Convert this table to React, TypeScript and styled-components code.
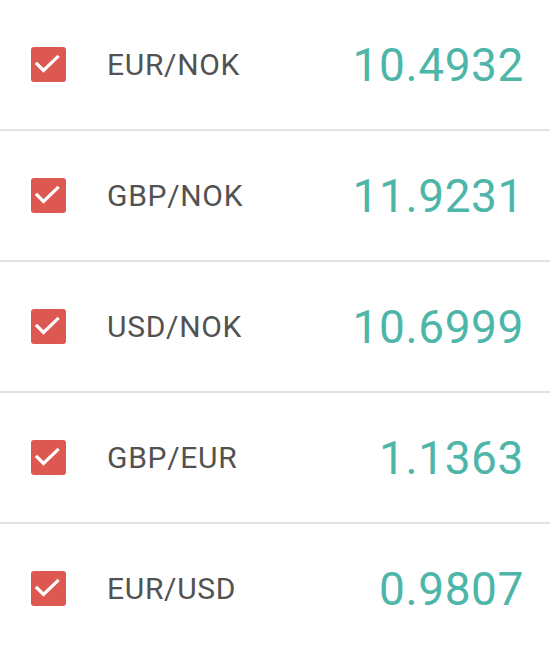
import React from "react";
import styled, { createGlobalStyle } from "styled-components";

const Global = createGlobalStyle`
  html, body { margin: 0; padding: 0; background: #fff; }
  body { font-family: Roboto, "Noto Sans", sans-serif; }
`;

const List = styled.ul`
  list-style: none;
  margin: 0;
  padding: 0;
  width: 550px;
`;

const Row = styled.li`
  display: flex;
  align-items: center;
  height: 129px;
  padding: 0 26px 0 31px;
  border-bottom: 2px solid #e3e3e3;
`;

const Box = styled.span`
  display: block;
  width: 35px;
  height: 35px;
  border-radius: 3px;
  background: #dc5850;
  flex-shrink: 0;
  svg { display: block; }
`;

const Label = styled.span`
  margin-left: 41px;
  font-size: 30px;
  letter-spacing: 0.7px;
  color: #525252;
  flex: 1;
`;

const Rate = styled.span`
  font-size: 46px;
  letter-spacing: 0.6px;
  color: #4db6a9;
`;

const rows = [
  ["EUR/NOK", "10.4932"],
  ["GBP/NOK", "11.9231"],
  ["USD/NOK", "10.6999"],
  ["GBP/EUR", "1.1363"],
  ["EUR/USD", "0.9807"],
];

export default function App() {
  return (
    <>
      <Global />
      <List>
        {rows.map(([pair, rate]) => (
          <Row key={pair}>
            <Box>
              <svg width="35" height="35" viewBox="0 0 35 35">
                <path d="M6 17 L12.5 23.5 L26.5 10" fill="none" stroke="#fff" strokeWidth="3.2" strokeLinecap="square" strokeLinejoin="miter" />
              </svg>
            </Box>
            <Label>{pair}</Label>
            <Rate>{rate}</Rate>
          </Row>
        ))}
      </List>
    </>
  );
}
